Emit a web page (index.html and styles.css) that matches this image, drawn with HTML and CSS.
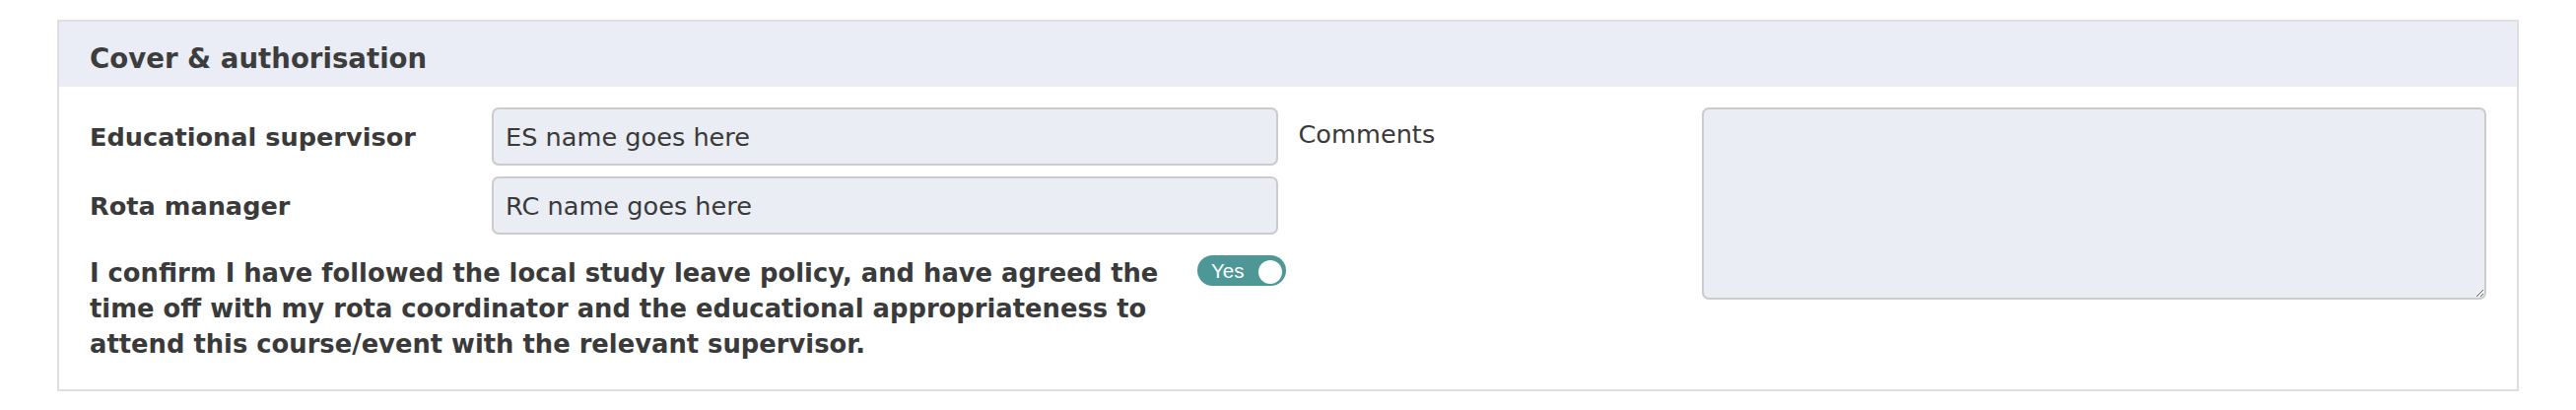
FILE: index.html
```html
<!DOCTYPE html>
<html lang="en">
<head>
<meta charset="utf-8">
<title>Cover &amp; authorisation</title>
<link rel="stylesheet" href="styles.css">
</head>
<body>
  <section class="panel">
    <header class="panel-head">Cover &amp; authorisation</header>
    <div class="panel-body">
      <div class="col">
        <div class="field">
          <label class="field-label" for="es">Educational supervisor</label>
          <input class="text-input" id="es" type="text" value="ES name goes here">
        </div>
        <div class="field">
          <label class="field-label" for="rc">Rota manager</label>
          <input class="text-input" id="rc" type="text" value="RC name goes here">
        </div>
        <div class="confirm">
          <p class="confirm-text">I confirm I have followed the local study leave policy, and have agreed the time off with my rota coordinator and the educational appropriateness to attend this course/event with the relevant supervisor.</p>
          <span class="toggle"><span class="toggle-label">Yes</span><span class="toggle-knob"></span></span>
        </div>
      </div>
      <div class="col">
        <div class="field field-top">
          <label class="comments-label" for="comments">Comments</label>
          <textarea class="comments" id="comments"></textarea>
        </div>
      </div>
    </div>
  </section>
</body>
</html>
```
FILE: styles.css
```css
html, body {
  margin: 0;
  background: #ffffff;
}
body {
  padding: 20px 58px 0 58px;
  font-family: "DejaVu Sans", Verdana, sans-serif;
  font-size: 25.6px;
  color: #3b3b3b;
}
.panel {
  border: 2px solid #dedede;
  background: #fff;
}
.panel-head {
  background: #eaedf5;
  height: 66px;
  box-sizing: border-box;
  padding: 21px 0 0 31px;
  font-weight: bold;
  font-size: 27.6px;
  line-height: 34px;
  color: #3d3d3d;
}
.panel-body {
  display: flex;
  gap: 21px;
  padding: 21px 31px 28px 31px;
}
.col {
  flex: 1 1 0;
  min-width: 0;
  display: flex;
  flex-direction: column;
}
.field {
  display: flex;
  align-items: center;
  margin-bottom: 11px;
}
.field-top {
  align-items: flex-start;
}
.field-label {
  width: 408px;
  flex: none;
  font-weight: bold;
  color: #3a3a3a;
}
.comments-label {
  width: 409px;
  flex: none;
  font-weight: normal;
  color: #3a3a3a;
  margin-top: 12px;
}
.text-input {
  flex: 1;
  min-width: 0;
  height: 59px;
  box-sizing: border-box;
  border: 2px solid #cbcbcb;
  border-radius: 7px;
  background: #eaedf4;
  padding: 0 12px;
  font-family: "DejaVu Sans", Verdana, sans-serif;
  font-size: 25.6px;
  color: #3a3a3a;
  margin: 0;
}
.comments {
  flex: 1;
  min-width: 0;
  height: 195px;
  box-sizing: border-box;
  border: 2px solid #cbcbcb;
  border-radius: 7px;
  background: #eaedf4;
  margin: 0;
  padding: 10px 12px;
  font-family: "DejaVu Sans", Verdana, sans-serif;
  font-size: 25.6px;
  resize: both;
}
.confirm {
  display: flex;
  align-items: flex-start;
  margin-top: 10px;
}
.confirm-text {
  width: 1110px;
  flex: none;
  margin: 0;
  font-weight: bold;
  font-size: 25.8px;
  line-height: 36px;
  color: #3a3a3a;
}
.toggle {
  margin-left: 14px;
  width: 90px;
  height: 31px;
  border-radius: 16px;
  background: #4d9896;
  display: flex;
  align-items: center;
  justify-content: space-between;
  padding: 0 4px 0 14px;
  box-sizing: border-box;
  flex: none;
}
.toggle-label {
  font-family: "Liberation Sans", Arial, sans-serif;
  font-size: 20.5px;
  color: #ffffff;
}
.toggle-knob {
  width: 24px;
  height: 24px;
  margin-top: 2px;
  border-radius: 50%;
  background: #ffffff;
}
```
